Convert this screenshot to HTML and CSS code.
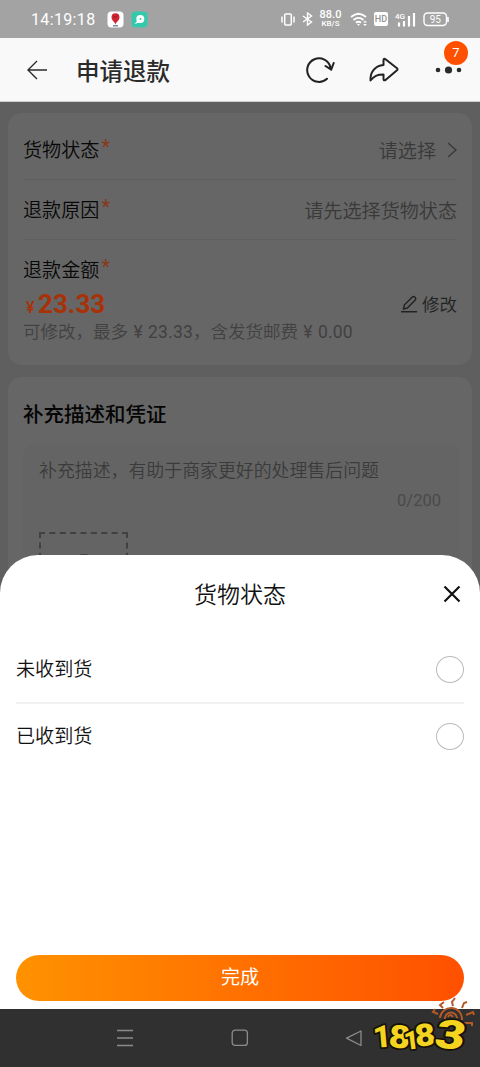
FILE: index.html
```html
<!DOCTYPE html>
<html lang="zh-CN">
<head>
<meta charset="utf-8">
<meta name="viewport" content="width=device-width, initial-scale=1">
<title>申请退款</title>
<link rel="stylesheet" href="styles.css">
</head>
<body>
<div class="phone">
  <div class="status-bar">
    <div class="status-left">
      <span class="clock">14:19:18</span>
      <svg class="app-pin" width="17" height="17" viewBox="0 0 17 17"><rect x=".5" y=".5" width="16" height="16" rx="4" fill="#fff"/><path d="M8.500 13.500C7.700 10.500 4.500 9.500 4.500 6.200a4 4 0 0 1 8 0C12.500 9.500 9.300 10.500 8.500 13.500Z" fill="#cf2531"/><path d="M6.500 5.500l2 1 1.500-2" stroke="#8d1b25" fill="none"/><path d="M6 14.800h5" stroke="#56708f" stroke-width="1.200"/></svg>
      <svg class="app-chat" width="17" height="17" viewBox="0 0 17 17"><rect x=".5" y=".5" width="16" height="16" rx="4" fill="#35c9ac"/><circle cx="9.300" cy="8" r="4" fill="#fff"/><path d="M7 9l-3.500 4 5-1.500" fill="#fff"/><circle cx="9.500" cy="8" r="1" fill="#35c9ac"/></svg>
    </div>
    <div class="status-right">
      <svg width="14" height="13" viewBox="0 0 14 13" fill="none" stroke="#fff" stroke-width="1.500"><rect x="3.700" y="1" width="6.600" height="11" rx="1"/><path d="M1 3.500v6M13 3.500v6"/></svg>
      <svg class="bluetooth" width="11" height="14" viewBox="0 0 11 14" fill="none" stroke="#fff" stroke-width="1.400"><path d="M1 4l8.500 6-4 3V1l4 3L1 10"/></svg>
      <div class="speed"><span>88.0</span><span class="unit">KB/S</span></div>
      <svg class="wifi" width="18" height="15" viewBox="0 0 18 15" fill="none" stroke="#fff" stroke-width="1.800"><path d="M1 5q7.500-6.500 15 0M3.500 8q5-4.300 10 0M6 10.800q2.500-2.200 5 0"/><path d="M7 12h3l-1.500 2z" fill="#fff" stroke="none"/><path d="M13 10.500l2-2 2 2zM13 12l2 2 2-2z" fill="#fff" stroke="none"/></svg>
      <span class="hd">HD</span>
      <svg class="signal" width="21" height="15" viewBox="0 0 21 15"><text x="0" y="7" class="signal-text">4G</text><path d="M4 14.500v-4M9 14.500V9M14 14.500V4M19 14.500V1" stroke="#fff" stroke-width="2.200"/></svg>
      <svg class="battery" width="27" height="15" viewBox="0 0 27 15"><rect x="1" y="1" width="22.500" height="12.500" rx="3.500" fill="none" stroke="#fff" stroke-width="1.400"/><path d="M25 5v5" stroke="#fff" stroke-width="1.600"/><text x="12.300" y="10.800" class="battery-text">95</text></svg>
    </div>
  </div>

  <header class="app-bar">
    <svg class="back" width="22" height="20" viewBox="0 0 22 20" fill="none" stroke="#2b2b2b" stroke-width="1.400"><path d="M11 1L2 10l9 9M2 10h19"/></svg>
    <h1>申请退款</h1>
    <div class="actions">
      <svg width="30" height="28" viewBox="0 0 30 28" fill="none" stroke="#222" stroke-width="2" stroke-linecap="round" stroke-linejoin="round"><path d="M21 22.800A11.800 11.800 0 1 1 24.500 11.500M19.500 10l5.700 3.700L27.700 7"/></svg>
      <svg width="30" height="26" viewBox="0 0 30 26" fill="none" stroke="#222" stroke-width="2" stroke-linejoin="round"><path d="M14.500 8V3.500Q14.500 1 16.500 2.300L28 11.300Q29 12.300 28 13.300L16.500 23Q14.500 24 14.500 22V17.500C8 17.500 5 19 1.500 23.500C1 15.500 6 8.500 14.500 8Z"/></svg>
      <div class="more"><svg width="27" height="8" viewBox="0 0 27 8" fill="#2b2b2b"><circle cx="3" cy="4" r="2.300"/><circle cx="13.500" cy="4" r="3.600"/><circle cx="24" cy="4" r="2.300"/></svg><span class="badge">7</span></div>
    </div>
  </header>

  <main class="content">
    <section class="card refund">
      <div class="row"><span class="label">货物状态<i>*</i></span><span class="value">请选择<svg class="chevron" width="10" height="16" viewBox="0 0 10 16" fill="none" stroke="#393939" stroke-width="1.400"><path d="M1 1l8 7-8 7"/></svg></span></div>
      <div class="row"><span class="label">退款原因<i>*</i></span><span class="value">请先选择货物状态</span></div>
      <div class="amount">
        <div class="label">退款金额<i>*</i></div>
        <div class="price-line"><span class="price"><small>¥</small>23.33</span><span class="edit"><svg width="17" height="18" viewBox="0 0 17 18" fill="none" stroke="#222" stroke-width="1.400"><path d="M2.500 14l.8-4L11 2.200q1.500-1.500 3 0t0 3L6.300 13zM0 16.800h16"/></svg>修改</span></div>
        <p class="hint">可修改，最多<b>¥</b><em>23.33</em>，含发货邮费<b>¥</b><em>0.00</em></p>
      </div>
    </section>
    <section class="card proof">
      <h2>补充描述和凭证</h2>
      <div class="field">
        <p>补充描述，有助于商家更好的处理售后问题</p>
        <div class="count">0/200</div>
        <div class="upload"><svg width="24" height="18" viewBox="0 0 24 18" fill="none" stroke="#3b3b3b" stroke-width="1.500"><path d="M1 17V4h6l2-3h6l2 3h6v13z"/></svg></div>
      </div>
    </section>

    <section class="sheet">
      <div class="sheet-head"><h2>货物状态</h2><svg class="close" width="18" height="18" viewBox="0 0 18 18" stroke="#111" stroke-width="2.200"><path d="M1.500 1.500l15 15M16.500 1.500l-15 15"/></svg></div>
      <div class="option"><span>未收到货</span><span class="radio"></span></div>
      <div class="option"><span>已收到货</span><span class="radio"></span></div>
      <div class="done">完成</div>
    </section>
  </main>

  <nav class="nav-bar">
    <svg width="18" height="18" viewBox="0 0 18 18" stroke="#8b8b8b" stroke-width="1.300"><path d="M1 1.500h16M1 9h16M1 16.500h16"/></svg>
    <svg width="18" height="18" viewBox="0 0 18 18" fill="none" stroke="#8b8b8b" stroke-width="1.300"><rect x="1.200" y="1.200" width="15.200" height="15.200" rx="3"/></svg>
    <svg width="18" height="18" viewBox="0 0 18 18" fill="none" stroke="#8b8b8b" stroke-width="1.300" stroke-linejoin="round"><path d="M16 2v14.500L1.500 9.200z"/></svg>
  </nav>

  <svg class="brand" width="110" height="70" viewBox="0 0 110 70">
    <g fill="none" stroke="#b35a28" stroke-width="2"><path d="M70 21a11 11 0 0 1 22 2M75 22a6 6 0 0 1 12-1M78 20q2-4 5 0"/><path d="M68 17l-5-2 2-3M73 11l-3-3 4-3M83 9l-1-4 3-4M92 11l2-5 3-1M96 18l7-3 1 3M94 26l8 0v3"/></g>
    <g class="digits">
      <text transform="translate(4 51) rotate(-5)" font-size="31">1</text>
      <text transform="translate(18 50) rotate(5) scale(1.150 1)" font-size="32">8</text>
      <text transform="translate(35 53) rotate(-7)" font-size="26">1</text>
      <text transform="translate(46 50) rotate(-7) scale(1.150 1)" font-size="31">8</text>
      <text transform="translate(63 50) rotate(6) skewX(-6) scale(1.280 1)" font-size="40">3</text>
    </g>
  </svg>
</div>
</body>
</html>
```
FILE: styles.css
```css
* { box-sizing: border-box; }
body { margin: 0; font-family: Roboto, "Noto Sans CJK SC", sans-serif; color: #111; }
h1, h2, p { margin: 0; }
svg { display: block; flex: none; }
.phone { position: relative; width: 480px; height: 1067px; overflow: hidden; display: flex; flex-direction: column; background: #fff; }

.status-bar { height: 38px; flex: none; background: #a3a3a3; color: #fff; display: flex; justify-content: space-between; align-items: center; padding: 0 30px 0 31px; }
.status-left, .status-right { display: flex; align-items: center; }
.clock { font-size: 16px; letter-spacing: .35px; width: 76px; white-space: nowrap; }
.app-chat { margin-left: 7px; }
.bluetooth { margin-left: 7px; }
.speed { margin-left: 6px; width: 23px; display: flex; flex-direction: column; align-items: center; font-size: 11px; line-height: 10px; font-weight: 500; }
.unit { font-size: 8px; line-height: 8px; }
.wifi { margin-left: 8px; }
.hd { margin-left: 6px; width: 14px; height: 14px; border-radius: 2px; background: #fff; color: #929292; font-size: 9px; line-height: 14px; font-weight: 500; text-align: center; }
.signal { margin-left: 7px; }
.signal-text { font-size: 8px; fill: #fff; font-weight: 500; }
.battery { margin-left: 7px; }
.battery-text { font-size: 10px; fill: #fff; text-anchor: middle; }

.app-bar { height: 64px; flex: none; background: #f9f9f9; display: flex; align-items: center; padding: 0 18px 0 26px; border-bottom: 1px solid #ccc; }
.app-bar h1 { margin-left: 28px; font-size: 23.5px; line-height: 32px; font-weight: 500; color: #2b2b2b; padding-top: 4px; }
.actions { margin-left: auto; display: flex; align-items: center; }
.actions svg + svg { margin-left: 33px; }
.more { position: relative; margin-left: 36px; }
.badge { position: absolute; left: 9px; top: -25px; width: 24px; height: 24px; border-radius: 50%; background: #ff5000; color: #fff; font-size: 13px; line-height: 24px; text-align: center; }

.content { position: relative; flex: 1; min-height: 0; overflow: hidden; background: #5f5f5f; padding: 11px 8px 0; }
.card { background: #666; border-radius: 14px; padding: 0 15px; }
.refund { height: 252px; padding-top: 7px; margin-bottom: 12px; }
.row { height: 60px; display: flex; justify-content: space-between; align-items: center; border-bottom: 1px solid #5f5f5f; }
.label { display: flex; font-size: 19.1px; line-height: 28px; color: #080808; padding-top: 2px; font-weight: 350; }
.label i { font-style: normal; font-weight: 400; font-size: 20px; line-height: 20px; color: #873819; margin-left: 2px; }
.value { display: flex; align-items: center; font-size: 19.1px; color: #393939; font-weight: 350; }
.chevron { margin-left: 11px; }
.amount { padding-top: 15px; }
.price-line { display: flex; align-items: center; justify-content: space-between; height: 36px; margin-top: 2px; }
.price { color: #a83207; font-size: 26px; font-weight: 700; line-height: 30px; padding-top: 2px; }
.price small { display: inline-block; width: 15px; padding-left: 3px; font-size: 16px; font-weight: 500; }
.edit { display: flex; align-items: center; gap: 4px; font-size: 17.5px; color: #222; font-weight: 350; margin-top: -3px; }
.hint { font-size: 17.5px; line-height: 20px; color: #414141; margin-top: -1px; white-space: nowrap; font-weight: 350; }
.hint b { font-weight: 400; display: inline-block; width: 20px; text-align: center; }
.hint em { font-style: normal; font-weight: 400; letter-spacing: .2px; }
.proof { height: 700px; padding: 22px 13px 0 15px; }
.proof h2 { font-size: 20.5px; line-height: 32px; font-weight: 500; color: #050505; }
.field { margin-top: 13px; height: 300px; background: #646464; border-radius: 10px; padding: 14px 18px 0 16px; }
.field p { font-size: 17.9px; line-height: 26px; color: #3b3b3b; white-space: nowrap; font-weight: 350; }
.count { text-align: right; font-size: 16.5px; line-height: 24px; margin-top: 5px; color: #4a4a4a; }
.upload { width: 89px; height: 89px; margin-top: 19px; border: 2px dashed #414141; display: flex; justify-content: center; padding-top: 20px; }

.sheet { position: absolute; left: 0; right: 0; bottom: 0; height: 454px; background: #fff; border-radius: 38px 38px 0 0; padding: 0 16px 8px; display: flex; flex-direction: column; font-weight: 350; }
.sheet-head { height: 80px; flex: none; display: grid; grid-template-columns: 26px 1fr 26px; align-items: center; }
.sheet-head h2 { grid-column: 2; text-align: center; font-size: 23px; font-weight: 350; line-height: 30px; padding-top: 1px; }
.close { margin-left: 5px; margin-top: -2px; }
.option { height: 67px; flex: none; display: flex; align-items: center; justify-content: space-between; font-size: 19.1px; }
.option span:first-child { padding-bottom: 2px; }
.option + .option { border-top: 2px solid #f1f1f1; }
.option + .option span:first-child { padding-bottom: 4px; }
.radio { width: 28px; height: 27px; margin-top: 2px; border: 1px solid #bbb; border-radius: 50%; }
.option + .option .radio { margin-top: 0; }
.done { margin-top: auto; height: 46px; flex: none; border-radius: 23px; background: linear-gradient(90deg, #ff9200, #ff5000); color: #fff; font-size: 19px; line-height: 46px; text-align: center; font-weight: 400; }

.nav-bar { height: 58px; flex: none; background: #303030; display: flex; align-items: center; justify-content: space-between; padding: 0 117px 0 116px; }
.brand { position: absolute; left: 370px; top: 997px; overflow: visible; }
.digits { font-family: Roboto, sans-serif; font-weight: 900; fill: #f4d41e; stroke: #171208; stroke-width: 3.5px; stroke-linejoin: round; paint-order: stroke; }
```
